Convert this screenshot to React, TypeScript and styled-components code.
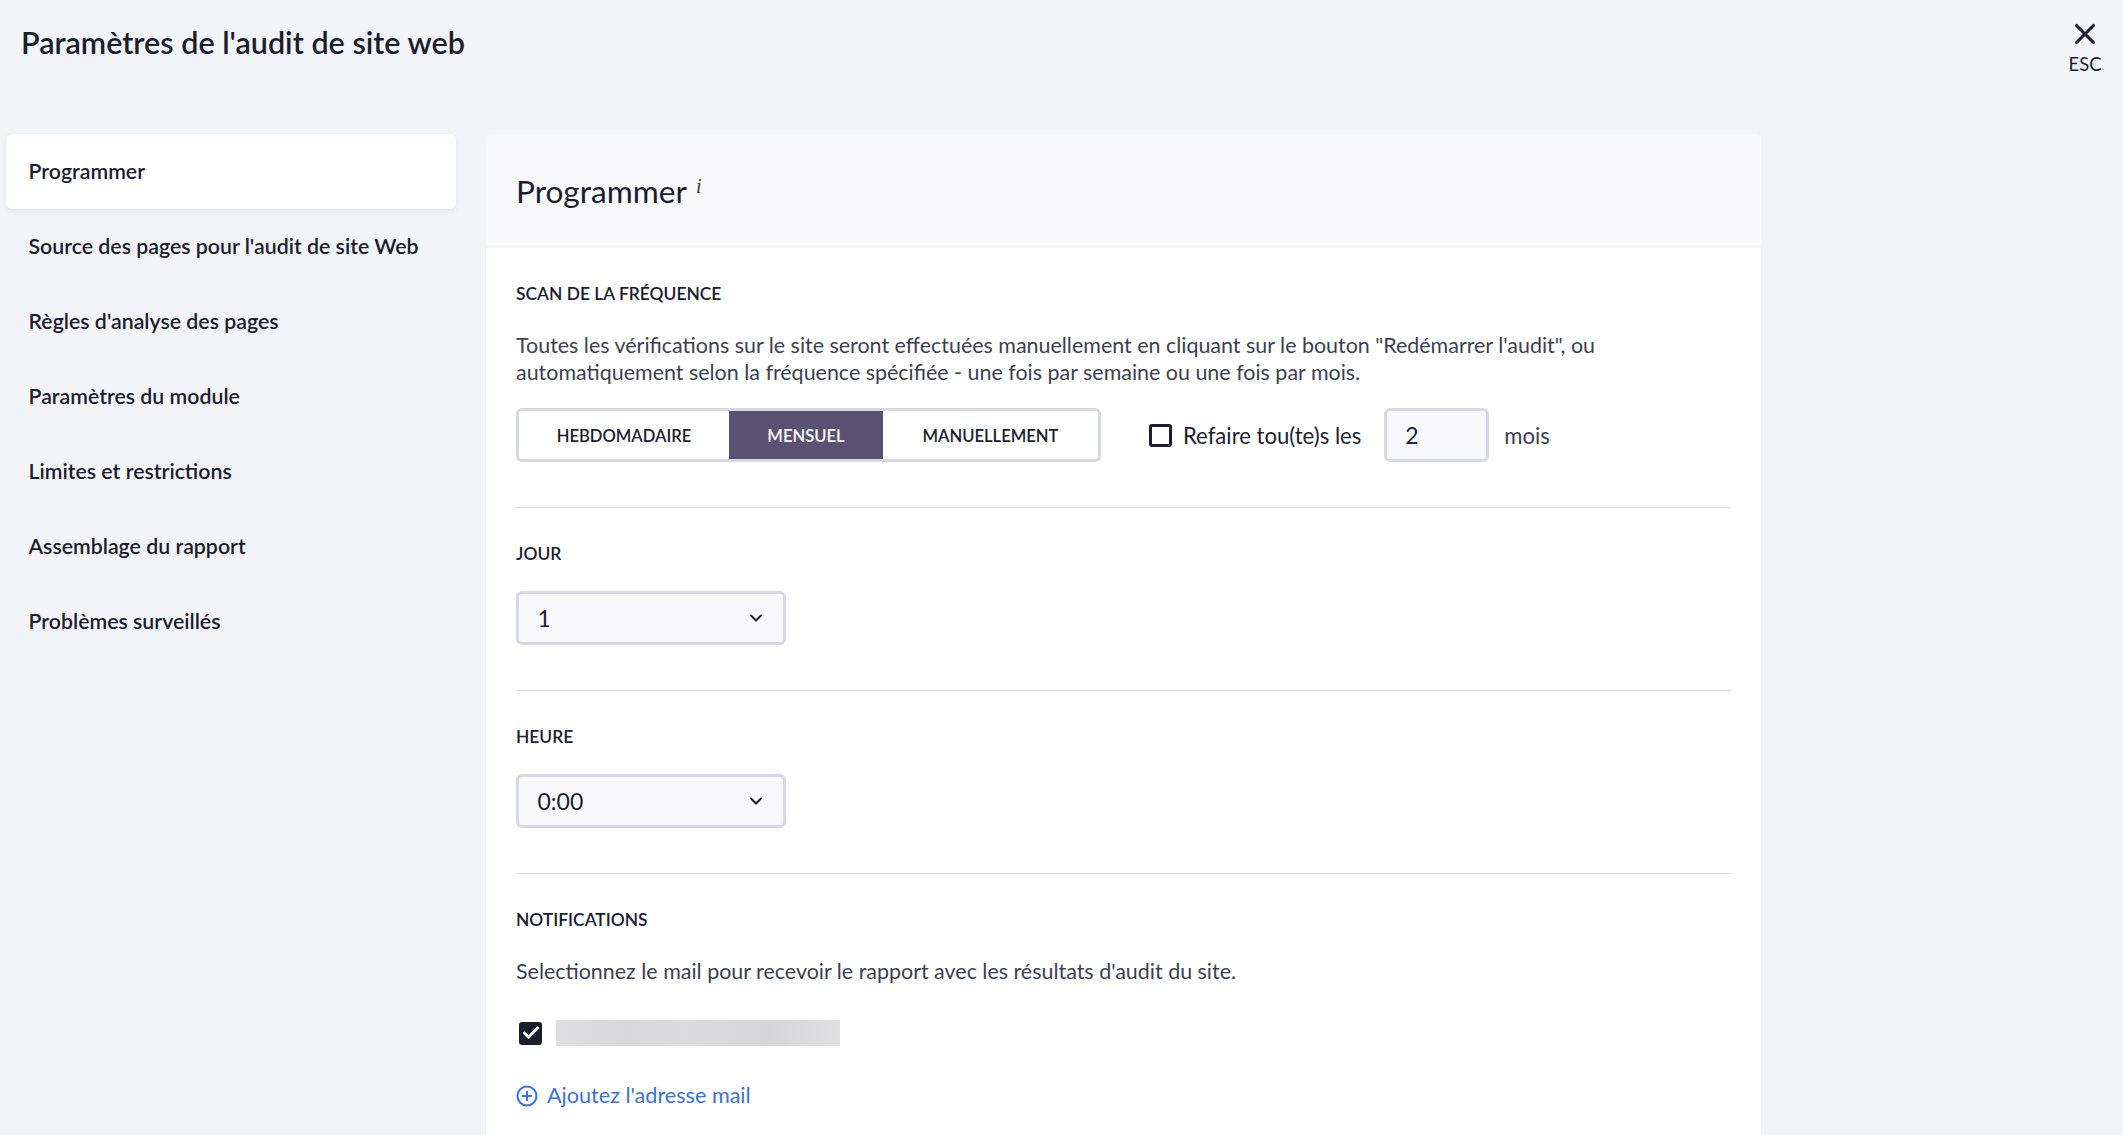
import React from 'react';
import styled, { createGlobalStyle } from 'styled-components';
import { ChevronDown, Check, X } from 'lucide-react';

const GlobalStyle = createGlobalStyle`
  html, body {
    margin: 0;
    height: 100%;
    overflow: hidden;
    background-color: #f3f4f8;
  }
  body {
    font-family: Lato, "Noto Sans", sans-serif;
    color: #1b1d2e;
  }
  * {
    box-sizing: border-box;
  }
`;

const Page = styled.div`
  width: 2123px;
  height: 1135px;
  overflow: hidden;
  background-color: #f3f4f8;
`;

const TopBar = styled.header`
  height: 134px;
  padding: 21px 21px 0 21px;
  display: flex;
  justify-content: space-between;
  align-items: flex-start;
`;

const PageTitle = styled.h1`
  margin: 0;
  font-size: 30.5px;
  line-height: 42px;
  font-weight: 600;
`;

const CloseButton = styled.button`
  border: none;
  background: none;
  padding: 0;
  margin-top: -4px;
  display: flex;
  flex-direction: column;
  align-items: center;
  color: #1b1d2e;
  font-family: inherit;
  font-size: 18.4px;
  line-height: 26px;
`;

const Layout = styled.div`
  display: grid;
  grid-template-columns: 450px 1275px;
  column-gap: 30px;
  padding-left: 6px;
`;

const Nav = styled.nav`
  display: flex;
  flex-direction: column;
`;

const NavItem = styled.div<{ $active?: boolean }>`
  height: 75px;
  padding: 0 0 2px 22.5px;
  display: flex;
  align-items: center;
  font-size: 21.3px;
  font-weight: 600;
  border-radius: 6px;
  background-color: ${(p) => (p.$active ? '#fff' : 'transparent')};
  box-shadow: ${(p) => (p.$active ? '0 2px 6px rgba(30, 32, 60, 0.07)' : 'none')};
`;

const Panel = styled.main`
  background-color: #fff;
  border-radius: 6px 6px 0 0;
  height: 1001px;
`;

const PanelHeader = styled.div`
  height: 114px;
  padding: 2px 30px 0;
  display: flex;
  align-items: center;
  background-color: #f9f9fc;
  border-bottom: 3px solid #f3f4f8;
  border-radius: 6px 6px 0 0;
`;

const PanelTitle = styled.h2`
  margin: 0;
  font-size: 31.6px;
  font-weight: 400;
  line-height: 44px;
`;

const Info = styled.sup`
  font-family: "Liberation Serif", serif;
  font-style: italic;
  font-size: 20px;
  margin-left: 9px;
  line-height: 0;
  position: relative;
  top: 2px;
  color: #3a3c4e;
`;

const Section = styled.section<{ $last?: boolean }>`
  margin: 0 30px;
  padding: 36px 0 45px;
  border-bottom: ${(p) => (p.$last ? 'none' : '1px solid #d9dae5')};
`;

const Label = styled.div`
  font-size: 17.4px;
  line-height: 20px;
  font-weight: 600;
  text-transform: uppercase;
`;

const Text = styled.p`
  margin: 28px 0 0;
  font-size: 21.45px;
  line-height: 27px;
  color: #3c3f50;
`;

const FrequencyRow = styled.div`
  margin-top: 22px;
  display: flex;
  align-items: center;
`;

const Segments = styled.div`
  width: 585px;
  height: 54px;
  display: flex;
  border: 3px solid #d7d8e4;
  border-radius: 6px;
  overflow: hidden;
`;

const Segment = styled.div<{ $active?: boolean; $width: number }>`
  width: ${(p) => p.$width}px;
  padding-top: 1px;
  display: flex;
  align-items: center;
  justify-content: center;
  font-size: 16.6px;
  font-weight: 600;
  color: ${(p) => (p.$active ? '#fff' : '#1b1d2e')};
  background-color: ${(p) => (p.$active ? '#5a5273' : '#fff')};
`;

const Box = styled.span<{ $checked?: boolean }>`
  width: 23px;
  height: 23px;
  flex: none;
  display: flex;
  align-items: center;
  justify-content: center;
  border-radius: 3px;
  border: 3px solid #1b1d2e;
  background-color: ${(p) => (p.$checked ? '#1b1d2e' : 'transparent')};
  color: #fff;
`;

const CheckMark = styled(Check)`
  flex: none;
`;

const RepeatBox = styled(Box)`
  margin-left: 48px;
`;

const RepeatLabel = styled.span`
  margin-left: 11px;
  font-size: 22.1px;
  color: #1b1d2e;
`;

const Field = styled.div`
  height: 54px;
  border: 3px solid #d7d8e4;
  border-radius: 6px;
  background-color: #f9f9fc;
  display: flex;
  align-items: center;
  font-size: 23px;
  color: #1b1d2e;
`;

const NumberField = styled(Field)`
  width: 105px;
  margin-left: 23px;
  padding-left: 18px;
`;

const Unit = styled.span`
  margin-left: 15px;
  font-size: 22.1px;
  color: #3c3f50;
`;

const SelectField = styled(Field)`
  width: 270px;
  margin-top: 27px;
  padding: 0 17px 0 18.5px;
  justify-content: space-between;
`;

const EmailRow = styled.div`
  margin-top: 35px;
  padding-left: 3px;
  display: flex;
  align-items: center;
  gap: 14px;
`;

const BlurredEmail = styled.div`
  width: 284px;
  height: 26px;
  background: linear-gradient(90deg, #dfdfe1 0%, #d8d8da 25%, #dcdcde 45%, #d6d6d8 75%, #e0e0e2 100%);
`;

const AddLink = styled.a`
  margin-top: 36px;
  display: flex;
  align-items: center;
  gap: 9px;
  font-size: 21.6px;
  line-height: 27px;
  color: #3b72d9;
`;

const PlusCircle = () => (
  <svg width="22" height="22" viewBox="0 0 22 22" fill="none" stroke="currentColor" strokeWidth="2">
    <circle cx="11" cy="11" r="9.5" />
    <path d="M11 6v10M6 11h10" />
  </svg>
);

const navItems = [
  'Programmer',
  "Source des pages pour l'audit de site Web",
  "Règles d'analyse des pages",
  'Paramètres du module',
  'Limites et restrictions',
  'Assemblage du rapport',
  'Problèmes surveillés',
];

const App = () => {
  return (
    <Page>
      <GlobalStyle />
      <TopBar>
        <PageTitle>Paramètres de l'audit de site web</PageTitle>
        <CloseButton>
          <X size={34} strokeWidth={2.2} />
          ESC
        </CloseButton>
      </TopBar>
      <Layout>
        <Nav>
          {navItems.map((item, i) => (
            <NavItem key={item} $active={i === 0}>
              {item}
            </NavItem>
          ))}
        </Nav>
        <Panel>
          <PanelHeader>
            <PanelTitle>
              Programmer<Info>i</Info>
            </PanelTitle>
          </PanelHeader>
          <Section>
            <Label>Scan de la fréquence</Label>
            <Text>
              Toutes les vérifications sur le site seront effectuées manuellement en cliquant sur le bouton "Redémarrer l'audit", ou
              <br />
              automatiquement selon la fréquence spécifiée - une fois par semaine ou une fois par mois.
            </Text>
            <FrequencyRow>
              <Segments>
                <Segment $width={210}>HEBDOMADAIRE</Segment>
                <Segment $width={154} $active>
                  MENSUEL
                </Segment>
                <Segment $width={215}>MANUELLEMENT</Segment>
              </Segments>
              <RepeatBox />
              <RepeatLabel>Refaire tou(te)s les</RepeatLabel>
              <NumberField>2</NumberField>
              <Unit>mois</Unit>
            </FrequencyRow>
          </Section>
          <Section>
            <Label>Jour</Label>
            <SelectField>
              1
              <ChevronDown size={20} strokeWidth={2.4} />
            </SelectField>
          </Section>
          <Section>
            <Label>Heure</Label>
            <SelectField>
              0:00
              <ChevronDown size={20} strokeWidth={2.4} />
            </SelectField>
          </Section>
          <Section $last>
            <Label>Notifications</Label>
            <Text>Selectionnez le mail pour recevoir le rapport avec les résultats d'audit du site.</Text>
            <EmailRow>
              <Box $checked>
                <CheckMark size={20} strokeWidth={3.4} />
              </Box>
              <BlurredEmail />
            </EmailRow>
            <AddLink>
              <PlusCircle />
              Ajoutez l'adresse mail
            </AddLink>
          </Section>
        </Panel>
      </Layout>
    </Page>
  );
};

export default App;
